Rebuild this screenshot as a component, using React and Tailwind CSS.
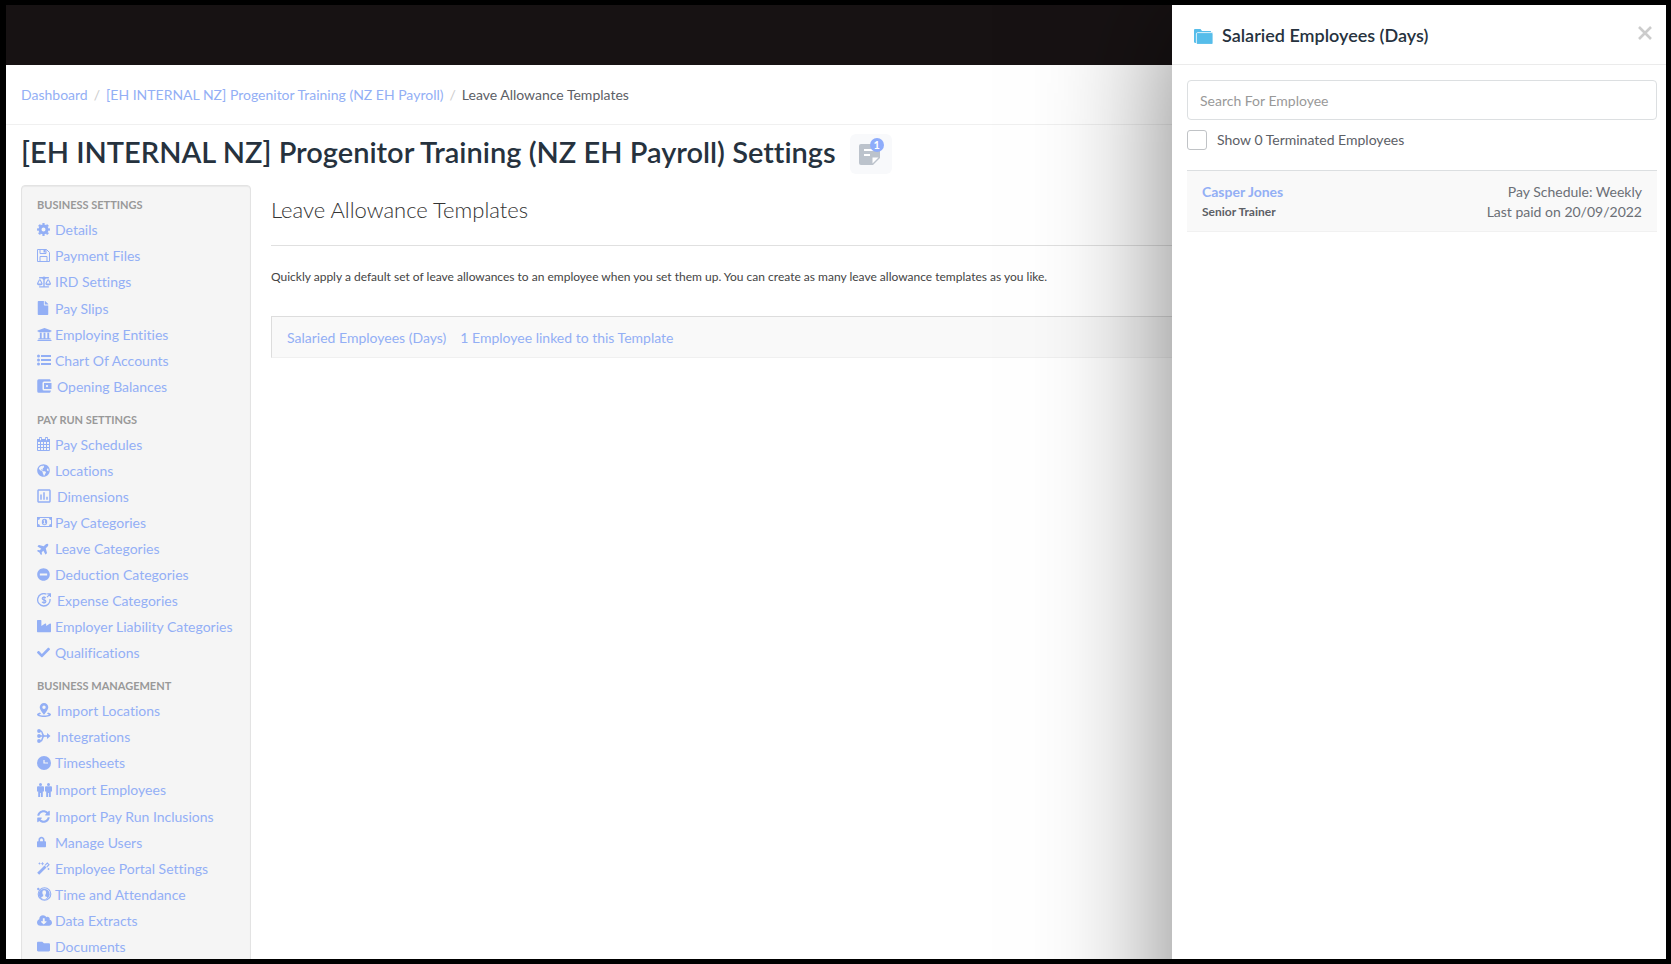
import React, { useState } from "react";
import {
  FaBalanceScale, FaFile, FaUniversity, FaGlobeAmericas, FaPlane, FaMinusCircle,
  FaIndustry, FaCheck, FaSyncAlt, FaLock, FaCloudDownloadAlt, FaFolder,
} from "react-icons/fa";
import { MdAccountBalanceWallet, MdOutlineAssessment } from "react-icons/md";

const CogIcon = () => (
  <svg viewBox="0 0 13 13" className="h-[13px] w-[13px]" fill="none" stroke="currentColor">
    <circle cx="6.500" cy="6.500" r="3.500" strokeWidth="3" />
    <circle cx="6.500" cy="6.500" r="5.500" strokeWidth="1.900" pathLength="80" strokeDasharray="5.500 4.500" strokeDashoffset="2.750" />
  </svg>
);

const SaveIcon = () => (
  <svg viewBox="0 0 13 13" className="h-[13px] w-[13px]" fill="none" stroke="currentColor">
    <path d="M.5.5h9l3 3v9H.5z" />
    <path d="M3 .5v4h6v-4M3 12.500v-5h7v5" />
    <path d="M6.500 1h2v2.500h-2z" fill="currentColor" stroke="none" />
  </svg>
);

const ListIcon = () => (
  <svg viewBox="0 0 14 12" className="h-[12px] w-[14px]" fill="currentColor">
    <circle cx="1.500" cy="2" r="1.500" />
    <circle cx="1.500" cy="6" r="1.500" />
    <circle cx="1.500" cy="10" r="1.500" />
    <path d="M4 1h10v2H4zM4 5h10v2H4zM4 9h10v2H4z" />
  </svg>
);

const CalendarIcon = () => (
  <svg viewBox="0 0 13 14" className="h-[14px] w-[13px]" fill="none" stroke="currentColor">
    <path d="M.5 2.500h12v11H.5zM.5 4.500h12M.5 7.500h12M.5 10.500h12M3.500 5v8M6.500 5v8M9.500 5v8" />
    <path d="M0 2h13v2.500H0z" fill="currentColor" stroke="none" />
    <path d="M3.500 0v4M9.500 0v4" strokeWidth="2.600" />
    <path d="M3.500 1v2.200M9.500 1v2.200" stroke="#f5f5f5" />
  </svg>
);

const MoneyIcon = () => (
  <svg viewBox="0 0 15 10" className="h-[10px] w-[15px]">
    <path fill="currentColor" d="M0 0h15v10H0z" />
    <path fill="#f5f5f5" d="M3 1h9a2 2 0 0 0 2 2v4a2 2 0 0 0-2 2H3a2 2 0 0 0-2-2V3a2 2 0 0 0 2-2Z" />
    <ellipse cx="7.500" cy="5" rx="2.700" ry="3.300" fill="currentColor" />
    <path d="M6.500 3.800l1-.6V6.500M6.300 6.700h2.400" stroke="#f5f5f5" fill="none" strokeWidth=".9" />
  </svg>
);

const ExpenseIcon = () => (
  <svg viewBox="0 0 14 14" className="h-[14px] w-[14px]" fill="none" stroke="currentColor">
    <path d="M9.500 1.200A6.200 6.200 0 1 0 13 6" strokeWidth="1.300" />
    <path d="M10 4.200L13 1.200M10.200.8h3.200V4" strokeWidth="1.200" />
    <path d="M8.700 5.100C8.300 4.400 7.700 4.200 7 4.200c-1 0-1.800.5-1.800 1.300C5.200 7.300 8.900 6.500 8.900 8.400c0 .9-.8 1.400-1.900 1.400-.9 0-1.600-.3-2-1.100M7 3.200v7.600" strokeWidth="1.200" />
  </svg>
);

const PinIcon = () => (
  <svg viewBox="0 0 14 14" className="h-[14px] w-[14px]" fill="currentColor">
    <path fillRule="evenodd" d="M7 0a4.300 4.300 0 0 1 4.300 4.300c0 2.700-4.300 7.500-4.300 7.500S2.700 7 2.700 4.300A4.300 4.300 0 0 1 7 0Zm0 2.500a1.700 1.700 0 1 0 0 3.400 1.700 1.700 0 0 0 0-3.400Z" />
    <path d="M3 9.500c-2 .5-3 1.200-3 2C0 13 3 14 7 14s7-1 7-2.500c0-.8-1-1.500-3-2l-1 1.200c1 .2 1.700.5 1.700.8 0 .5-2 1-4.700 1s-4.700-.5-4.700-1c0-.3.7-.6 1.700-.8Z" />
  </svg>
);

const IntegrationsIcon = () => (
  <svg viewBox="0 0 14 14" className="h-[14px] w-[14px]" fill="currentColor">
    <circle cx="2" cy="2" r="1.900" />
    <circle cx="2" cy="7" r="1.900" />
    <circle cx="2" cy="12" r="1.900" />
    <path d="M2 2h2c1.500 0 1 5 3.500 5C5 7 5.500 12 4 12H2M2 7h9" fill="none" stroke="currentColor" strokeWidth="1.500" />
    <path d="M10 4l3.500 3L10 10z" />
  </svg>
);

const ClockIcon = () => (
  <svg viewBox="0 0 14 14" className="h-[14px] w-[14px]">
    <circle cx="7" cy="7" r="7" fill="currentColor" />
    <path d="M7 4v3h4" fill="none" stroke="#f5f5f5" strokeWidth="1.200" />
  </svg>
);

const PeopleIcon = () => (
  <svg viewBox="0 0 15 14" className="h-[14px] w-[15px]" fill="currentColor">
    <circle cx="3.500" cy="1.500" r="1.500" />
    <path d="M1.200 3.300h4.600c.7 0 1.200.5 1.200 1.200v4H5.800V14H3.900v-4h-.8v4H1.200V8.500H0v-4c0-.7.500-1.200 1.200-1.200Z" />
    <circle cx="11.500" cy="1.500" r="1.500" />
    <path d="M9.200 3.300h4.600c.7 0 1.200.5 1.200 1.200v4h-1.200V14h-1.900v-4h-.8v4H9.200V8.500H8v-4c0-.7.500-1.200 1.200-1.200Z" />
  </svg>
);

const WandIcon = () => (
  <svg viewBox="0 0 13 13" className="h-[13px] w-[13px]" fill="none" stroke="currentColor">
    <path d="M1.200 11.800L8.500 4.500" strokeWidth="2.800" />
    <path d="M8 3.300L10.300 1l1.700 1.700L9.700 5" strokeWidth="1.100" />
    <path d="M2.500.5v2M1.500 1.500h2M5.500.2v3M4 1.700h3M11.500 6v2M10.500 7h2" strokeWidth=".8" />
  </svg>
);

const AttendanceIcon = () => (
  <svg viewBox="0 0 15 14" className="h-[14px] w-[15px]">
    <circle cx="7.500" cy="7" r="6.300" fill="none" stroke="currentColor" strokeWidth="1.100" />
    <circle cx="7.200" cy="7.200" r="5.500" fill="currentColor" />
    <ellipse cx="7.200" cy="5.700" rx="1.900" ry="2.400" fill="#f5f5f5" />
    <path d="M6.200 7.500h2v1.700l2.200 1.100c-.8 1.300-1.900 1.900-3.200 1.900s-2.400-.6-3.200-1.900l2.200-1.100z" fill="#f5f5f5" />
    <circle cx="1.300" cy="2" r="1.200" fill="currentColor" />
  </svg>
);

const groups = [
  {
    title: "Business Settings",
    items: [
      { label: "Details", icon: <CogIcon /> },
      { label: "Payment Files", icon: <SaveIcon /> },
      { label: "IRD Settings", icon: <FaBalanceScale className="h-[14px] w-[14px]" />, tall: true },
      { label: "Pay Slips", icon: <FaFile className="h-[14px] w-[12px]" /> },
      { label: "Employing Entities", icon: <FaUniversity className="h-[15px] w-[15px]" /> },
      { label: "Chart Of Accounts", icon: <ListIcon /> },
      { label: "Opening Balances", icon: <MdAccountBalanceWallet className="-ml-[2px] h-[18px] w-[18px]" />, wide: true },
    ],
  },
  {
    title: "Pay Run Settings",
    items: [
      { label: "Pay Schedules", icon: <CalendarIcon /> },
      { label: "Locations", icon: <FaGlobeAmericas className="h-[13px] w-[13px]" /> },
      { label: "Dimensions", icon: <MdOutlineAssessment className="-ml-[2px] h-[18px] w-[18px]" />, wide: true },
      { label: "Pay Categories", icon: <MoneyIcon /> },
      { label: "Leave Categories", icon: <FaPlane className="h-[13px] w-[13px] -rotate-45" /> },
      { label: "Deduction Categories", icon: <FaMinusCircle className="h-[13px] w-[13px]" /> },
      { label: "Expense Categories", icon: <ExpenseIcon />, wide: true },
      { label: "Employer Liability Categories", icon: <FaIndustry className="h-[14px] w-[14px]" /> },
      { label: "Qualifications", icon: <FaCheck className="h-[13px] w-[13px]" /> },
    ],
  },
  {
    title: "Business Management",
    items: [
      { label: "Import Locations", icon: <PinIcon />, wide: true },
      { label: "Integrations", icon: <IntegrationsIcon />, wide: true },
      { label: "Timesheets", icon: <ClockIcon />, tall: true },
      { label: "Import Employees", icon: <PeopleIcon />, tall: true },
      { label: "Import Pay Run Inclusions", icon: <FaSyncAlt className="h-[13px] w-[13px]" /> },
      { label: "Manage Users", icon: <FaLock className="h-[12px] w-[9px]" /> },
      { label: "Employee Portal Settings", icon: <WandIcon /> },
      { label: "Time and Attendance", icon: <AttendanceIcon /> },
      { label: "Data Extracts", icon: <FaCloudDownloadAlt className="h-[15px] w-[15px]" /> },
      { label: "Documents", icon: <FaFolder className="h-[13px] w-[13px]" /> },
    ],
  },
];

const Sidebar = () => (
  <nav className="w-[230px] shrink-0 rounded border border-[#e3e3e3] bg-[#f5f5f5] px-[15px] pt-[8px] shadow-[inset_0_1px_1px_rgba(0,0,0,0.05)]">
    {groups.map((group) => (
      <div key={group.title} className="mb-[10px]">
        <h3 className="flex h-[22px] items-center text-[11px] font-bold uppercase text-[#999]">{group.title}</h3>
        <ul>
          {group.items.map((item) => (
            <li key={item.label}>
              <a
                href="#"
                className={`flex items-center whitespace-nowrap text-[14px] text-[#93aff5] ${item.tall ? "h-[27px]" : "h-[26px]"}`}
              >
                <span className={`flex shrink-0 items-center ${item.wide ? "w-[20px]" : "w-[18px]"}`}>{item.icon}</span>
                {item.label}
              </a>
            </li>
          ))}
        </ul>
      </div>
    ))}
  </nav>
);

const EmployeePanel = () => {
  const [search, setSearch] = useState("");
  const [showTerminated, setShowTerminated] = useState(false);

  return (
    <aside className="absolute right-0 top-0 h-[130vh] w-[494px] bg-white shadow-[0_0_120px_rgba(0,0,0,0.5)]">
      <div className="flex h-[60px] items-center border-b border-[#ebebeb] pl-[22px] pr-[14px]">
        <svg viewBox="0 0 19 15" className="mt-[3px] h-[15px] w-[19px]">
          <path fill="#56bdea" d="M0 1.200C0 .5.500 0 1.200 0h5.300l1.500 2H16c.7 0 1.200.4 1.200 1.200V14H1.200C.5 14 0 13.500 0 12.800z" />
          <path fill="#56bdea" stroke="#fff" strokeWidth=".8" d="M2.400 4.800c0-.7.500-1.200 1.200-1.200h14.200c.7 0 1.200.5 1.200 1.200v9.400c0 .7-.5 1.200-1.200 1.200H3.600c-.7 0-1.200-.5-1.200-1.200z" />
        </svg>
        <h2 className="ml-[9px] mt-[2px] flex-1 text-[18px] font-semibold text-[#26323e]">Salaried Employees (Days)</h2>
        <button type="button" aria-label="Close" className="mb-[4px] cursor-pointer text-[#ccc]">
          <svg viewBox="0 0 14 14" className="h-[14px] w-[14px]" stroke="currentColor" strokeWidth="2.600">
            <path d="M1 1l12 12M13 1L1 13" />
          </svg>
        </button>
      </div>
      <div className="pl-[15px] pr-[9px] pt-[15px]">
        <input
          type="text"
          aria-label="Search For Employee"
          placeholder="Search For Employee"
          value={search}
          onChange={(e) => setSearch(e.target.value)}
          className="h-[40px] w-full rounded border border-[#dcdfe1] px-[12px] text-[14px] text-[#5c6066] placeholder:text-[#999]"
        />
        <label className="mt-[10px] flex items-center text-[14px] leading-[20px] text-[#5c6066]">
          <input
            type="checkbox"
            checked={showTerminated}
            onChange={(e) => setShowTerminated(e.target.checked)}
            className="mr-[10px] h-[20px] w-[20px] appearance-none rounded-[3px] border border-[#c0c3c6] bg-white checked:bg-[#93aff5]"
          />
          Show 0 Terminated Employees
        </label>
        <div className="mt-[20px] flex justify-between border-b border-t border-b-[#f1f1f1] border-t-[#dcdfe1] bg-[#f9f9f9] px-[15px] pb-[9px] pt-[11px] leading-[20px]">
          <div>
            <a href="#" className="block text-[14px] font-bold text-[#93aff5]">Casper Jones</a>
            <div className="text-[12px] font-bold text-[#5c6066]">Senior Trainer</div>
          </div>
          <div className="text-right text-[14px] text-[#6b6f76]">
            <div>Pay Schedule: Weekly</div>
            <div>Last paid on 20/09/2022</div>
          </div>
        </div>
      </div>
    </aside>
  );
};

const App = () => {
  return (
    <div className="h-screen bg-black pb-[5px] pl-[6px] pr-[5px] pt-[5px] font-['Lato','Liberation_Sans',sans-serif] [font-variant-ligatures:none]">
      <div className="relative h-full overflow-hidden bg-white">
        <header className="h-[60px] bg-[#171213]" />

        {/* Breadcrumb */}
        <ol className="flex h-[60px] items-center whitespace-nowrap border-b border-[#f0f0f0] px-[15px] text-[14px]">
          <li><a href="#" className="text-[#93aff5]">Dashboard</a></li>
          <li className="px-[6px] text-[#ccc]">/</li>
          <li><a href="#" className="text-[#93aff5]">[EH INTERNAL NZ] Progenitor Training (NZ EH Payroll)</a></li>
          <li className="px-[6px] text-[#ccc]">/</li>
          <li className="text-[#5c6066]">Leave Allowance Templates</li>
        </ol>

        {/* Page title */}
        <div className="flex h-[60px] items-center gap-[14px] whitespace-nowrap px-[15px] pb-[4px]">
          <h1 className="pb-[2px] text-[29px] font-semibold text-[#26323e]">
            [EH INTERNAL NZ] Progenitor Training (NZ EH Payroll) Settings
          </h1>
          <button type="button" aria-label="Notes" className="relative mt-[2px] flex h-[40px] w-[42px] cursor-pointer items-center rounded-md bg-[#f8f9fb] pl-[9px]">
            <svg viewBox="0 0 21 21" className="h-[21px] w-[21px]">
              <path d="M2 0h17a2 2 0 0 1 2 2v12l-7 7H2a2 2 0 0 1-2-2V2a2 2 0 0 1 2-2Z" fill="#bcc3cc" />
              <path d="M5 6h10M5 11h6" stroke="#fff" strokeWidth="2" />
              <path d="M13.500 19.500v-6h6z" fill="#fff" />
            </svg>
            <span className="absolute right-[8px] top-[4px] flex h-[14px] w-[14px] items-center justify-center rounded-full bg-[#8eacfb] text-[11px] font-bold text-white">
              1
            </span>
          </button>
        </div>

        <div className="flex items-start px-[15px]">
          <Sidebar />
          <main className="ml-[20px] flex-1">
            <h2 className="flex h-[61px] items-center border-b border-[#e0e0e0] pb-[12px] text-[22px] font-light text-[#333]">
              Leave Allowance Templates
            </h2>
            <p className="mt-[21px] text-[12px] leading-[20px] text-[#444]">
              Quickly apply a default set of leave allowances to an employee when you set them up. You can create as many leave
              allowance templates as you like.
            </p>
            <div className="mt-[29px] flex h-[42px] items-center gap-[14px] border border-[#ddd] border-b-[#f0f0f0] bg-[#f9f9f9] px-[15px] text-[14px] text-[#93aff5]">
              <a href="#">Salaried Employees (Days)</a>
              <a href="#">1 Employee linked to this Template</a>
            </div>
          </main>
        </div>

        <EmployeePanel />
      </div>
    </div>
  );
};

export default App;
